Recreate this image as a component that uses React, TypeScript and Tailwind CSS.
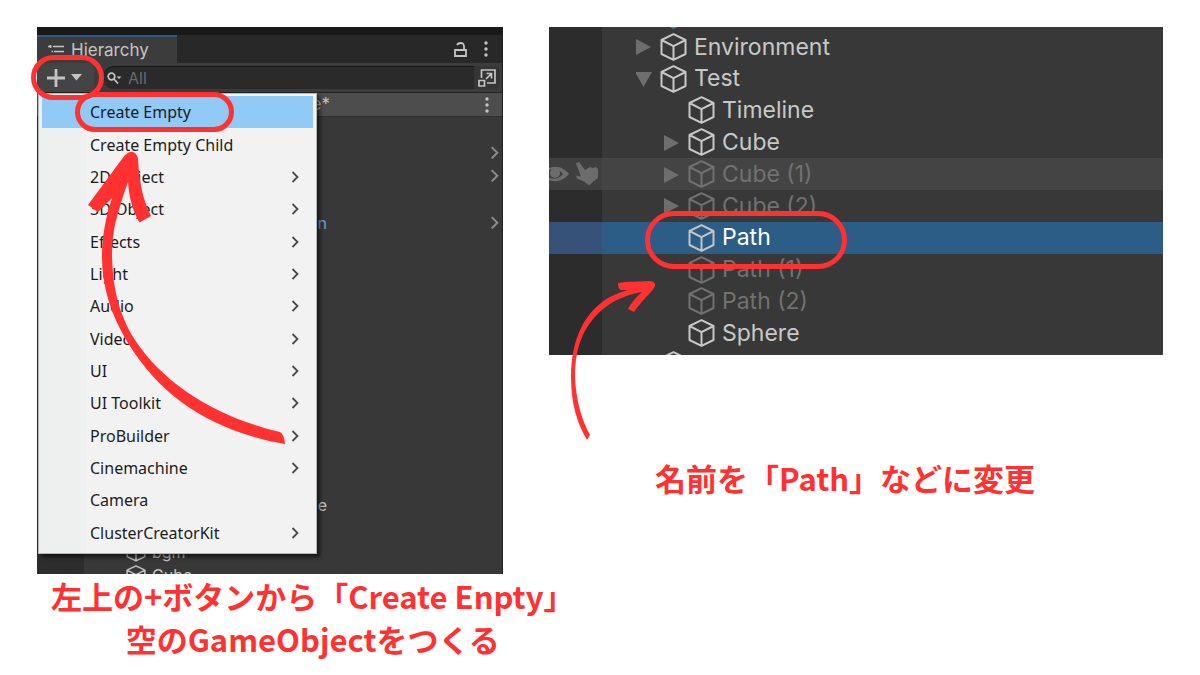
import type { ReactNode } from 'react'
import clsx from 'clsx'

type MenuItem = { label: string; submenu?: boolean }

type TreeNode = {
  label: string
  depth: 0 | 1
  fold?: 'open' | 'closed'
  tone?: 'normal' | 'dim' | 'prefab'
  state?: 'hover' | 'selected'
}

const menuItems: MenuItem[] = [
  { label: 'Create Empty' },
  { label: 'Create Empty Child' },
  { label: '2D Object', submenu: true },
  { label: '3D Object', submenu: true },
  { label: 'Effects', submenu: true },
  { label: 'Light', submenu: true },
  { label: 'Audio', submenu: true },
  { label: 'Video', submenu: true },
  { label: 'UI', submenu: true },
  { label: 'UI Toolkit', submenu: true },
  { label: 'ProBuilder', submenu: true },
  { label: 'Cinemachine', submenu: true },
  { label: 'Camera' },
  { label: 'ClusterCreatorKit', submenu: true },
]

// Rows behind the menu, only what sticks out of it
const sceneRows: { tail?: string; prefab?: boolean; open?: boolean; label?: string }[] = [
  {},
  { open: true },
  { open: true },
  {},
  { tail: 'n', prefab: true, open: true },
  {}, {}, {}, {}, {}, {}, {}, {}, {}, {}, {},
  { tail: 'e' },
  {},
  { label: 'bgm' },
  { label: 'Cube' },
]

const nodes: TreeNode[] = [
  { label: '', depth: 0, tone: 'prefab' },
  { label: 'Environment', depth: 0, fold: 'closed' },
  { label: 'Test', depth: 0, fold: 'open' },
  { label: 'Timeline', depth: 1 },
  { label: 'Cube', depth: 1, fold: 'closed' },
  { label: 'Cube (1)', depth: 1, fold: 'closed', tone: 'dim', state: 'hover' },
  { label: 'Cube (2)', depth: 1, fold: 'closed', tone: 'dim' },
  { label: 'Path', depth: 1, state: 'selected' },
  { label: 'Path (1)', depth: 1, tone: 'dim' },
  { label: 'Path (2)', depth: 1, tone: 'dim' },
  { label: 'Sphere', depth: 1 },
  { label: '', depth: 0 },
]

function CubeIcon({ className }: { className?: string }) {
  return (
    <svg viewBox="0 0 27 28" fill="none" className={className}>
      <path
        d="M13.5 1.2 25.5 7v14L13.5 26.8 1.5 21V7zM1.5 7l12 6.2L25.5 7M13.5 13.2v13.6"
        stroke="currentColor"
        strokeWidth="2"
        strokeLinejoin="round"
      />
    </svg>
  )
}

function Chevron({ className }: { className?: string }) {
  return (
    <svg viewBox="0 0 8 12" fill="none" className={className}>
      <path d="M1.5 1 6.5 6l-5 5" stroke="currentColor" strokeWidth="1.8" />
    </svg>
  )
}

function Dots() {
  return (
    <svg viewBox="0 0 4 16" fill="currentColor" className="h-4 w-1">
      <circle cx="2" cy="2" r="1.7" />
      <circle cx="2" cy="8" r="1.7" />
      <circle cx="2" cy="14" r="1.7" />
    </svg>
  )
}

function FoldArrow({ fold }: { fold?: 'open' | 'closed' }) {
  return (
    <svg viewBox="0 0 17 17" fill="currentColor" className="w-[17px] shrink-0 text-[#6e6e6e]">
      {fold === 'closed' && <path d="M0 1v16l15-8z" />}
      {fold === 'open' && <path d="M-1 2h17L7.5 17z" />}
    </svg>
  )
}

function Caption({ className, children }: { className?: string; children: ReactNode }) {
  return (
    <figcaption
      className={clsx(
        "w-max text-center font-['Noto_Sans_CJK_JP',sans-serif] text-[31px] leading-[43px] font-bold whitespace-nowrap text-[#ff3131]",
        className,
      )}
    >
      {children}
    </figcaption>
  )
}

function CreateMenu() {
  return (
    <div className="absolute top-[66px] left-px flex h-[461px] w-[279px] flex-col border border-[#b8b8b8] bg-linear-to-r from-[#eef0f0] from-[47px] to-[#f2f2f2] to-[47px] px-[3px] pt-[2px] pb-1 font-['Noto_Sans',sans-serif] text-base text-[#1c1c1c] shadow-[3px_3px_4px_rgba(0,0,0,0.6)]">
      {menuItems.map((item, i) => (
        <button
          key={item.label}
          className={clsx(
            'flex min-h-0 flex-1 items-center justify-between pr-[14px] pl-12 text-left',
            i === 0 && 'bg-[#91c9f7]',
          )}
        >
          {item.label}
          {item.submenu && <Chevron className="w-2 text-[#4a4a4a]" />}
        </button>
      ))}
    </div>
  )
}

function HierarchyWindow() {
  return (
    <div className="relative h-[547px] overflow-hidden border-r border-[#222] bg-[#383838] text-[#c4c4c4]">
      <div className="h-2 bg-[#191919]" />

      {/* Tab bar */}
      <div className="flex h-7 items-stretch justify-between bg-[#282828]">
        <div className="flex w-[140px] items-center gap-[7px] border-t-2 border-[#2c5d87] bg-[#3c3c3c] pt-[2px] pl-[11px] text-[17px]">
          <svg viewBox="0 0 16 13" fill="none" stroke="currentColor" strokeWidth="1.5" className="w-4">
            <path d="M0 1.5h3.5M5 1.5h11M2.5 0v3M3.5 6.5h1.5M6 6.5h10M3.5 11.5h1.5M6 11.5h10" />
          </svg>
          Hierarchy
        </div>
        <div className="flex items-center gap-[17px] pr-[14px]">
          <svg viewBox="0 0 13 15" fill="none" stroke="currentColor" strokeWidth="1.8" className="w-[13px]">
            <path d="M1 8h11v6H1zM10 8V4.500Q10 1 6.500 1 4 1 3 3" />
          </svg>
          <Dots />
        </div>
      </div>

      {/* Toolbar */}
      <div className="flex h-[30px] items-center border-b border-[#232323] bg-[#3c3c3c] pr-[2px]">
        <button aria-label="Create" className="flex h-full w-[57px] items-center gap-[6px] bg-[#444] pl-[10px]">
          <svg viewBox="0 0 18 18" className="w-[18px]" stroke="currentColor" strokeWidth="2.8">
            <path d="M9 0v18M0 9h18" />
          </svg>
          <svg viewBox="0 0 11 7" fill="currentColor" className="w-[11px]">
            <path d="M0 0h11L5.5 6.5z" />
          </svg>
        </button>
        <label className="ml-[9px] flex h-[23px] flex-1 items-center rounded-l-xl border-t border-[#151515] bg-[#2a2a2a] pl-1">
          <svg viewBox="0 0 16 12" fill="none" stroke="currentColor" strokeWidth="1.7" className="w-4">
            <circle cx="4.5" cy="4.5" r="3.300" />
            <path d="m7 7 4 4.5" />
            <path d="M9.5 4.5h5L12 7z" fill="currentColor" stroke="none" />
          </svg>
          <input
            type="search"
            aria-label="Search"
            placeholder="All"
            className="min-w-0 flex-1 bg-transparent pl-[5px] text-base placeholder:text-[#6b6b6b]"
          />
        </label>
        <button aria-label="Open search" className="flex h-[23px] w-[26px] items-center justify-center rounded-r-md bg-[#353535]">
          <svg viewBox="0 0 18 18" fill="none" stroke="currentColor" strokeWidth="1.7" className="w-[18px]">
            <path d="M3.500 9V1H17v13H9M1 11.500h5.500V17H1zM8 10l5-5M8.500 4.500h5v5" />
          </svg>
        </button>
      </div>

      {/* Scene header */}
      <div className="flex h-6 items-center justify-between border-b border-[#303030] bg-[#4d4d4d] pr-[13px]">
        <span className="w-[293px] text-right text-[17px]">e*</span>
        <Dots />
      </div>

      <ul className="flex h-[470px] flex-col bg-linear-to-r from-[#2d2d2d] from-[47px] to-[#383838] to-[47px] text-base">
        {sceneRows.map((row, i) => (
          <li key={i} className="flex min-h-0 flex-1 items-center justify-between pr-[3px]">
            {row.label ? (
              <span className="flex items-center gap-[6px] pl-[89px]">
                <CubeIcon className="w-5" />
                {row.label}
              </span>
            ) : (
              <span className={clsx('w-[290px] text-right', row.prefab && 'text-[#6aa3e0]')}>{row.tail}</span>
            )}
            {row.open && <Chevron className="w-[9px] text-[#8c8c8c]" />}
          </li>
        ))}
      </ul>

      <CreateMenu />
    </div>
  )
}

function TreeRow({ node }: { node: TreeNode }) {
  const { label, depth, fold, tone = 'normal', state } = node
  return (
    <li
      className={clsx(
        'flex min-h-0 flex-1 items-center',
        state === 'hover' && 'bg-[#444]',
        state === 'selected' && 'bg-[#2c5d87] text-white',
        tone === 'dim' && 'text-[#717171]',
        tone === 'prefab' && 'text-[#3a7fd0]',
      )}
    >
      <div
        className={clsx(
          'flex w-[53px] items-center self-stretch',
          !state && 'bg-[#2c2c2c]',
          state === 'hover' && 'bg-[#3f3f3f]',
          state === 'selected' && 'bg-[#375279]',
        )}
      >
        {state === 'hover' && (
          <>
            <svg viewBox="0 0 20 16" className="w-5">
              <path d="M0 2C8-1 15 2 20 8 15 14 8 17 0 14v-2c6 2 11 0 14-4C11 4 6 2 0 4z" fill="#6c6c6c" />
              <circle cx="6" cy="7" r="5" fill="#6c6c6c" />
            </svg>
            <svg viewBox="0 0 23 24" className="ml-[7px] w-[23px]">
              <path
                d="M0 1.5 3 0l6 8 5-3 3 1 3-1 2 2v9l-4 3-5 4.5-5-4-7-3-1-3 5 1z"
                fill="#6c6c6c"
              />
            </svg>
          </>
        )}
      </div>
      <div className={clsx('flex items-center', depth === 0 ? 'pl-[34px]' : 'pl-[62px]')}>
        <FoldArrow fold={fold} />
        <CubeIcon className={clsx('ml-[7px] w-[27px] shrink-0', state === 'selected' && 'text-[#c4c4c4]')} />
        <span className="ml-[7px]">{label}</span>
      </div>
    </li>
  )
}

export default function App() {
  return (
    <main className="grid min-h-screen grid-cols-[466fr_614fr] items-start gap-[46px] bg-white px-[37px] pt-[27px] font-['Inter',sans-serif]">
      <figure className="relative min-w-0">
        <HierarchyWindow />
        <Caption className="ml-[14px]">
          左上の+ボタンから「Create Enpty」
          <br />
          空のGameObjectをつくる
        </Caption>

        {/* Highlights */}
        <div className="absolute top-[28px] left-[-6px] h-[45px] w-[73px] rounded-full border-[5px] border-[#ff3131]" />
        <div className="absolute top-[65px] left-[38px] h-[40px] w-[159px] rounded-full border-[5px] border-[#ff3131]" />
        <svg viewBox="88 148 200 300" fill="#ff3131" className="absolute top-[121px] left-[51px] h-[300px] w-[200px]">
          <path d="M88 205C100 189 112 172 125 155Q134 147 138 158C139 182 143 200 151 216L139.5 222.5C132 210 129 196 128 182C124 193 121 202 119 210C114 226 112 238 112 257C113 287 118 313 135 340C164 384 216 417 280 432Q284 434 285 444C212 431 162 398 128 343C112 317 102 288 102 257C102 236 106 216 112 198L98 212Z" />
        </svg>
      </figure>

      <figure className="relative min-w-0">
        <div className="h-[328px] overflow-hidden bg-[#383838]">
          <ul className="-mt-7 flex h-[382px] flex-col text-[23px] text-[#c8c8c8]">
            {nodes.map((node, i) => (
              <TreeRow key={i} node={node} />
            ))}
          </ul>
        </div>
        <Caption className="mt-[101px] ml-[106px]">名前を「Path」などに変更</Caption>

        {/* Highlights */}
        <div className="absolute top-[184px] left-24 h-[58px] w-[202px] rounded-full border-[5px] border-[#ff3131]" />
        <svg viewBox="567 275 90 170" fill="#ff3131" className="absolute top-[248px] left-[18px] h-[170px] w-[90px]">
          <path d="M587 440C577 423 571 403 571 377C571 330 592 299 628 290L621 290Q618 289 618 283C628 281 639 282 648 281Q656 281 655 286Q654 289 650 293C643 300 638 306 634 312L628 309C631 303 636 297 642 292C608 298 592 317 583 335C577 348 575 362 575 377C576 399 581 419 590 435Z" />
        </svg>
      </figure>
    </main>
  )
}
